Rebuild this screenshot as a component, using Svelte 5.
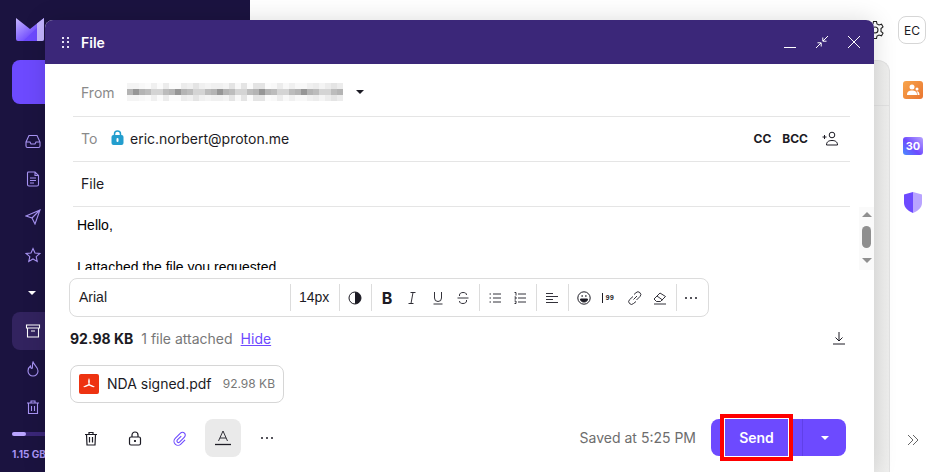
<script>
	// pixelated stand-in for the blurred sender address: three rows of 6px cells
	const light = ["#f4f4f4", "#ececec", "#f8f8f8", "#e4e4e4", "#f0f0f0", "#fbfbfb"];
	const mid = ["#a8a8a8", "#c2c2c2", "#969696", "#b4b4b4", "#d4d4d4", "#a0a0a0", "#bcbcbc"];
	const blur = [];
	for (let r = 0; r < 3; r++) {
		for (let i = 0; i < 36; i++) {
			const n = i * 5 + ((i * i) % 7) + r * 3;
			blur.push(r === 1 ? mid[n % mid.length] : light[n % light.length]);
		}
	}

	const nav = ["inbox", "draft", "sent", "star"];
	const nav2 = ["fire", "trash"];
</script>

<div class="page">
	<aside class="sidebar">
		<div class="logo">
			<svg width="28" height="23" viewBox="0 0 28 23">
				<defs>
					<linearGradient id="logo-left" x1="0" y1="0" x2="1" y2="1">
						<stop offset="0" stop-color="#c8b8ff" />
						<stop offset="0.6" stop-color="#7a58ff" />
					</linearGradient>
				</defs>
				<path d="M0 0 L14 11 L28 0 V21 a2 2 0 0 1 -2 2 H2 a2 2 0 0 1 -2 -2 Z" fill="url(#logo-left)" />
				<path d="M7 23 L21 10 V23 Z" fill="#6d4aff" />
				<path d="M21 5.500 L28 0 V21 a2 2 0 0 1 -2 2 H21 Z" fill="#c4b5ff" />
			</svg>
		</div>
		<div class="new-btn"></div>
		<nav class="nav">
			{#each nav as item}
				<span class="nav-item">
					<svg width="16" height="16" viewBox="0 0 16 16" fill="none" stroke="#a995f5" stroke-width="1.1">
						{#if item === "inbox"}
							<path d="M1 9 L4 2.500 H12 L15 9 V13 a1.500 1.500 0 0 1 -1.500 1.500 H2.500 A1.500 1.500 0 0 1 1 13 Z M1 9 H5 L6 11 H10 L11 9 H15" />
						{:else if item === "draft"}
							<path d="M3 1 H10 L13.500 4.500 V13.500 a1.500 1.500 0 0 1 -1.500 1.500 H4 a1.500 1.500 0 0 1 -1.500 -1.500 V2 Z M10 1 V4.500 H13.500 M5 7 H11 M5 9.500 H11 M5 12 H9" />
						{:else if item === "sent"}
							<path d="M1 7 L15 1 L10 15 L7 9 Z M7 9 L15 1" />
						{:else}
							<path d="M8 1.500 L10 6 L14.800 6.500 L11.200 9.700 L12.200 14.500 L8 12 L3.800 14.500 L4.800 9.700 L1.200 6.500 L6 6 Z" />
						{/if}
					</svg>
				</span>
			{/each}
			<span class="nav-item caret"><i class="tri"></i></span>
			<span class="nav-item active">
				<svg width="16" height="16" viewBox="0 0 16 16" fill="none" stroke="#fff" stroke-width="1.1">
					<path d="M1.500 2 H14.500 V5 H1.500 Z M2.500 5 V14 H13.500 V5 M6 8 H10" />
				</svg>
			</span>
			{#each nav2 as item}
				<span class="nav-item">
					<svg width="16" height="16" viewBox="0 0 16 16" fill="none" stroke="#a995f5" stroke-width="1.1">
						{#if item === "fire"}
							<path d="M8 1 C9 4 13 6 13 10 A5 5 0 0 1 3 10 C3 8 4 6 5.500 5 C5.500 6.500 6 7.500 7 7.500 C8 6 7 3 8 1 Z" />
						{:else}
							<path d="M2 4 H14 M6 4 V2 H10 V4 M3.500 4 V14.500 H12.500 V4 M6.500 7 V12 M9.500 7 V12" />
						{/if}
					</svg>
				</span>
			{/each}
		</nav>
		<div class="storage">
			<div class="bar"><div class="fill"></div></div>
			<span class="gb">1.15 GB</span>
		</div>
	</aside>

	<main class="main">
		<header class="topbar">
			<svg class="gear" width="20" height="20" viewBox="0 0 20 20" fill="none" stroke="#222" stroke-width="1.100">
				<circle cx="10" cy="10" r="3" />
				<path d="M8.500 1.500 H11.500 L12 4 L14 5 L16.500 4.200 L18 6.800 L16 8.500 V11.500 L18 13.200 L16.500 15.800 L14 15 L12 16 L11.500 18.500 H8.500 L8 16 L6 15 L3.500 15.800 L2 13.200 L4 11.500 V8.500 L2 6.800 L3.500 4.200 L6 5 L8 4 Z" />
			</svg>
			<span class="avatar">EC</span>
		</header>
		<div class="content">
			<div class="card">
				<div class="card-line"></div>
			</div>
			<div class="rail">
				<div class="apps">
					<span class="app orange">
						<svg width="14" height="12" viewBox="0 0 14 12" fill="#fff">
							<circle cx="6" cy="3" r="2.500" />
							<path d="M1 11 C1 7.500 3 6.500 6 6.500 C9 6.500 11 7.500 11 11 Z" />
							<circle cx="11" cy="5" r="1.500" />
							<path d="M11.500 11 C11.800 9.500 11.500 8 10.500 7.200 C12.500 7 13.500 8.500 13.500 11 Z" />
						</svg>
					</span>
					<span class="app cal">30</span>
					<svg class="shield" width="20" height="21" viewBox="0 0 20 21">
						<path d="M10 0 L19 2.500 V11 C19 16 14 19.500 10 21 Z" fill="#b9a4ff" />
						<path d="M10 0 L1 2.500 V11 C1 16 6 19.500 10 21 Z" fill="#6d4aff" />
					</svg>
				</div>
				<svg class="expand" width="12" height="12" viewBox="0 0 12 12" fill="none" stroke="#666" stroke-width="1">
					<path d="M1 1 L6 6 L1 11 M6 1 L11 6 L6 11" />
				</svg>
			</div>
		</div>
	</main>

	<section class="composer">
		<div class="title">
			<span class="grip">
				{#each Array(6) as _}<i></i>{/each}
			</span>
			<span class="title-text">File</span>
			<div class="win-btns">
				<svg width="14" height="14" viewBox="0 0 14 14" stroke="#fff" stroke-width="1"><path d="M1 12.500 H13" /></svg>
				<svg width="14" height="14" viewBox="0 0 14 14" stroke="#fff" stroke-width="1" fill="none"><path d="M1 13 L6 8 M2.500 7.800 H6.200 V11.500 M13 1 L8 6 M7.800 2.500 V6.200 H11.500" /></svg>
				<svg width="14" height="14" viewBox="0 0 14 14" stroke="#fff" stroke-width="1"><path d="M1 1 L13 13 M13 1 L1 13" /></svg>
			</div>
		</div>

		<div class="fields">
			<div class="row from">
				<span class="label">From</span>
				<span class="blur">
					{#each blur as c}<i style="background:{c}"></i>{/each}
				</span>
				<i class="tri dark"></i>
			</div>
			<div class="row to">
				<span class="label">To</span>
				<svg class="lock" width="13" height="15" viewBox="0 0 13 15">
					<path d="M3.500 6 V4 a3 3 0 0 1 6 0 V6" fill="none" stroke="#239ece" stroke-width="1.500" />
					<rect x="0.500" y="5" width="12" height="10" rx="2" fill="#239ece" />
					<rect x="5.500" y="8" width="2" height="4" rx="1" fill="#fff" />
				</svg>
				<span class="addr">eric.norbert@proton.me</span>
				<span class="cc">CC</span>
				<span class="cc bcc">BCC</span>
				<svg class="add-user" width="16" height="15" viewBox="0 0 16 15" fill="none" stroke="#1c1b24" stroke-width="1">
					<circle cx="10" cy="4" r="2.800" />
					<path d="M4.500 14 C4.500 10.500 7 9.500 10 9.500 C13 9.500 15.500 10.500 15.500 14 Z M0.500 6 H4.500 M2.500 4 V8" />
				</svg>
			</div>
			<div class="row subject">File</div>
		</div>

		<div class="body">
			<div class="mail">
				<p>Hello,</p>
				<p>I attached the file you requested.</p>
			</div>
			<div class="scroll">
				<i class="up"></i>
				<i class="thumb"></i>
				<i class="down"></i>
			</div>
		</div>

		<div class="toolbar">
			<span class="font">Arial</span>
			<span class="size">14px</span>
			<span class="group">
				<svg width="14" height="14" viewBox="0 0 14 14"><circle cx="7" cy="7" r="6" fill="none" stroke="#1c1b24" /><path d="M7 1 A6 6 0 0 1 7 13 Z" fill="#1c1b24" /></svg>
			</span>
			<span class="group">
				<b class="fmt bold">B</b>
				<svg width="14" height="14" viewBox="0 0 14 14" fill="none" stroke="#1c1b24" stroke-width="0.900"><path d="M5.500 1.500 H10.500 M3.500 12.500 H8.500 M8 1.500 L6 12.500" /></svg>
				<svg width="14" height="14" viewBox="0 0 14 14" fill="none" stroke="#1c1b24" stroke-width="0.900"><path d="M3.500 1 V7 a3.500 3.500 0 0 0 7 0 V1 M2.500 13 H11.500" /></svg>
				<svg width="14" height="14" viewBox="0 0 14 14" fill="none" stroke="#1c1b24" stroke-width="0.900"><path d="M1.500 7 H12.500 M10.500 4 C10.500 2 9 1.500 7 1.500 C5 1.500 3.500 2.500 3.500 4 V5 M3.500 10 C3.500 12 5 12.500 7 12.500 C9 12.500 10.500 11.500 10.500 10 V9" /></svg>
			</span>
			<span class="group">
				<svg width="14" height="14" viewBox="0 0 14 14" fill="none" stroke="#1c1b24" stroke-width="0.900"><path d="M5 3 H13 M5 7 H13 M5 11 H13 M1.500 3 H3 M1.500 7 H3 M1.500 11 H3" /></svg>
				<svg width="14" height="14" viewBox="0 0 14 14" fill="none" stroke="#1c1b24" stroke-width="0.900"><path d="M5 3 H13 M5 7 H13 M5 11 H13 M1.500 1.500 H3 V4.500 M1.500 6 H3 V8 H1.500 M1.500 10 H3 V12.500 H1.500" /></svg>
			</span>
			<span class="group">
				<svg width="14" height="14" viewBox="0 0 14 14" fill="none" stroke="#1c1b24" stroke-width="0.900"><path d="M1 2.500 H8 M1 5.500 H13 M1 8.500 H8 M1 11.500 H13" /></svg>
			</span>
			<span class="group">
				<svg width="14" height="14" viewBox="0 0 14 14" fill="none" stroke="#1c1b24" stroke-width="1"><circle cx="7" cy="7" r="6.200" /><path d="M3.500 8 H10.500 C10.500 10 9 11 7 11 C5 11 3.500 10 3.500 8 Z" fill="#1c1b24" /><path d="M4.500 5 H5.800 M8.200 5 H9.500" stroke-width="1.500" /></svg>
				<span class="quote"><i></i>99</span>
				<svg width="14" height="14" viewBox="0 0 14 14" fill="none" stroke="#1c1b24" stroke-width="0.900"><path d="M5.500 8.500 L9 5 M6 3.500 L8 1.700 a2.500 2.500 0 0 1 4 3.800 L8.500 9 M8 10.500 L5.500 12.500 a2.500 2.500 0 0 1 -4 -3.800 L5 5.500" /></svg>
				<svg width="14" height="14" viewBox="0 0 14 14" fill="none" stroke="#1c1b24" stroke-width="0.900"><path d="M1 8 L7 2 L12.500 5.500 L7.500 10.500 H3.500 Z M4 5 L9.500 9 M1 13 H13" /></svg>
			</span>
			<span class="group last">
				<span class="dots"><i></i><i></i><i></i></span>
			</span>
		</div>

		<div class="attach-info">
			<b>92.98 KB</b>
			<span class="muted">1 file attached</span>
			<span class="hide">Hide</span>
			<svg class="download" width="14" height="14" viewBox="0 0 14 14" fill="none" stroke="#1c1b24" stroke-width="1"><path d="M7 1 V10 M3.500 6.500 L7 10 L10.500 6.500 M1 13 H13" /></svg>
		</div>

		<div class="chip">
			<span class="pdf">
				<svg width="14" height="14" viewBox="0 0 14 14" fill="#fff">
					<path d="M7 1 C8 3 8 5 7.500 7 C9 8 11 8.500 13 10 C11 10.500 8.500 9.500 7 8.500 C5.500 9.500 3 10.500 1 10 C3 8.500 5 8 6.500 7 C6 5 6 3 7 1 Z" />
				</svg>
			</span>
			<span class="fname">NDA signed.pdf</span>
			<span class="fsize">92.98 KB</span>
		</div>

		<div class="footer">
			<div class="tools">
				<span class="tool">
					<svg width="14" height="15" viewBox="0 0 14 15" fill="none" stroke="#1c1b24" stroke-width="1.200"><path d="M1 3.500 H13 M5 3.500 V1.500 H9 V3.500 M2.500 3.500 L3 14 H11 L11.500 3.500 M5.500 6 V11.500 M8.500 6 V11.500" /></svg>
				</span>
				<span class="tool">
					<svg width="14" height="15" viewBox="0 0 14 15" fill="none" stroke="#1c1b24" stroke-width="1.200"><rect x="1.500" y="6" width="11" height="8" rx="1.500" /><path d="M4 6 V4 a3 3 0 0 1 6 0 V6" /><path d="M7 9 V11" stroke-width="1.800" /></svg>
				</span>
				<span class="tool">
					<svg width="17" height="17" viewBox="0 0 17 17" fill="none" stroke="#6d4aff" stroke-width="1.100"><path transform="rotate(45 8.500 8.500)" d="M8 5.500 V11 a1.500 1.500 0 0 0 3 0 V4 a2.800 2.800 0 0 0 -5.600 0 V11.500 a4 4 0 0 0 8 0 V5.500" /></svg>
				</span>
				<span class="tool on">
					<svg width="16" height="16" viewBox="0 0 16 16" fill="none" stroke="#1c1b24" stroke-width="0.900"><path d="M3.500 11 L8 1 L12.500 11 M5 8 H11" /><path d="M0 14.500 H16" stroke-width="1.300" /></svg>
				</span>
				<span class="tool"><span class="dots"><i></i><i></i><i></i></span></span>
			</div>
			<span class="saved">Saved at 5:25 PM</span>
			<div class="send">
				<span class="send-main">Send</span>
				<span class="send-more"><i class="tri white"></i></span>
				<span class="mark"></span>
			</div>
		</div>
	</section>
</div>

<style>
	:global(body) {
		margin: 0;
		font-family: Inter, "Noto Sans", sans-serif;
	}

	.page {
		position: relative;
		display: flex;
		width: 936px;
		height: 472px;
		overflow: hidden;
		background: #fff;
	}

	i {
		display: block;
	}

	.sidebar {
		display: flex;
		flex-direction: column;
		width: 250px;
		flex: none;
		box-sizing: border-box;
		padding: 18px 0 0 12px;
		background: #1b1340;
	}

	.logo {
		height: 23px;
		margin-left: 4px;
	}

	.new-btn {
		width: 100px;
		height: 44px;
		margin-top: 19px;
		border-radius: 8px;
		background: #6d4aff;
	}

	.nav {
		display: flex;
		flex-direction: column;
		width: 100px;
		margin-top: 18px;
	}

	.nav-item {
		display: flex;
		align-items: center;
		height: 38px;
		padding-left: 13px;
	}

	.active {
		width: 100px;
		box-sizing: border-box;
		border-radius: 8px;
		background: #32235f;
	}

	.tri {
		width: 0;
		height: 0;
		border-left: 4px solid transparent;
		border-right: 4px solid transparent;
		border-top: 4px solid #fff;
	}

	.caret .tri {
		margin-left: 3px;
	}

	.tri.dark {
		border-top-color: #1c1b24;
		margin-left: 13px;
	}

	.storage {
		margin-top: 6px;
	}

	.bar {
		width: 100px;
		height: 4px;
		border-radius: 2px;
		background: #3b2779;
	}

	.fill {
		width: 14px;
		height: 4px;
		border-radius: 2px;
		background: #b9a4ff;
	}

	.gb {
		display: block;
		margin-top: 12px;
		font-size: 10px;
		font-weight: 700;
		color: #a995f5;
	}

	.main {
		display: flex;
		flex-direction: column;
		flex: 1;
		min-width: 0;
	}

	.topbar {
		display: flex;
		justify-content: flex-end;
		align-items: center;
		gap: 13px;
		height: 60px;
		flex: none;
		box-sizing: border-box;
		padding: 0 10px 0 0;
	}

	.avatar {
		display: flex;
		align-items: center;
		justify-content: center;
		width: 26px;
		height: 26px;
		border: 1px solid #d6d6d6;
		border-radius: 8px;
		font-size: 12px;
		color: #1c1b24;
	}

	.content {
		display: flex;
		flex: 1;
		min-height: 0;
	}

	.card {
		flex: 1;
		border: 1px solid #e2e2e2;
		border-bottom: none;
		border-radius: 12px 12px 0 0;
		background: linear-gradient(90deg, #fff 0, #e9e9e8 96%, #efefee 100%);
	}

	.card-line {
		margin-top: 44px;
		border-top: 1px solid #e2e2e2;
	}

	.rail {
		display: flex;
		flex-direction: column;
		align-items: center;
		width: 46px;
		flex: none;
		padding-top: 21px;
		box-sizing: border-box;
	}

	.apps {
		display: flex;
		flex-direction: column;
		align-items: center;
		gap: 37.500px;
		height: 353px;
	}

	.app {
		display: flex;
		align-items: center;
		justify-content: center;
		width: 20px;
		height: 18px;
		flex: none;
		border-radius: 3px;
	}

	.orange {
		background: linear-gradient(135deg, #f8a54b, #e97530);
	}

	.cal {
		font-size: 11px;
		font-weight: 700;
		color: #fff;
		background: linear-gradient(45deg, #4a8dff 0, #6d4aff 45%, #b9a4ff 100%);
	}

	.shield {
		flex: none;
	}

	.composer {
		position: absolute;
		left: 45px;
		top: 20px;
		display: flex;
		flex-direction: column;
		width: 829px;
		height: 452px;
		border-radius: 8px 8px 0 0;
		background: #fff;
		box-shadow: 0 0 24px rgba(0, 0, 0, 0.14);
	}

	.title {
		display: flex;
		align-items: center;
		height: 44px;
		flex: none;
		box-sizing: border-box;
		padding: 0 13px 0 17px;
		border-radius: 8px 8px 0 0;
		background: #3b2779;
		color: #fff;
	}

	.grip {
		display: grid;
		grid-template-columns: 2px 2px;
		gap: 2.500px 3px;
		margin-right: 12px;
	}

	.grip i {
		width: 2px;
		height: 2px;
		background: #e6e1f7;
	}

	.title-text {
		font-size: 14px;
		font-weight: 600;
	}

	.win-btns {
		display: flex;
		gap: 18px;
		margin-left: auto;
	}

	.fields {
		margin: 0 24px 0 28px;
		flex: none;
	}

	.row {
		display: flex;
		align-items: center;
		box-sizing: border-box;
		height: 45px;
		padding: 0 0 2px 8px;
		border-bottom: 1px solid #e5e5e5;
		font-size: 14px;
		color: #1c1b24;
	}

	.from {
		height: 53px;
		padding-top: 6px;
	}

	.label {
		width: 46px;
		color: #8a8a8a;
	}

	.to .label {
		width: 30px;
	}

	.blur {
		display: flex;
		flex-wrap: wrap;
		width: 216px;
		height: 18px;
	}

	.blur i {
		width: 6px;
		height: 6px;
	}

	.lock {
		margin-right: 6px;
		margin-bottom: 2px;
	}

	.addr {
		margin-right: auto;
	}

	.cc {
		font-size: 12px;
		font-weight: 700;
		margin-right: 11px;
	}

	.bcc {
		margin-right: 14px;
	}

	.add-user {
		margin-right: 12px;
	}

	.body {
		display: flex;
		height: 63px;
		flex: none;
		margin: 0 0 0 27px;
		overflow: hidden;
		justify-content: space-between;
	}

	.mail {
		padding: 8px 0 0 5px;
		font-family: "Liberation Sans", Arial, sans-serif;
		font-size: 14px;
		line-height: 21px;
		color: #000;
	}

	.mail p {
		margin: 0 0 21px;
	}

	.scroll {
		display: flex;
		flex-direction: column;
		align-items: center;
		justify-content: space-between;
		width: 15px;
		height: 63px;
		padding: 5px 0 7px;
		box-sizing: border-box;
		background: #fafafa;
	}

	.scroll .thumb {
		width: 9px;
		height: 22px;
		margin-top: -2px;
		border-radius: 5px;
		background: #8f8f8f;
	}

	.scroll .up,
	.scroll .down {
		width: 0;
		height: 0;
		border-left: 5px solid transparent;
		border-right: 5px solid transparent;
	}

	.scroll .up {
		border-bottom: 5px solid #8f8f8f;
	}

	.scroll .down {
		border-top: 5px solid #8f8f8f;
	}

	.toolbar {
		display: flex;
		align-items: center;
		box-sizing: border-box;
		width: 640px;
		height: 39px;
		flex: none;
		margin: 8px 0 0 24px;
		border: 1px solid #dcdcdc;
		border-radius: 8px;
		font-size: 14px;
		color: #1c1b24;
	}

	.font {
		width: 220px;
		box-sizing: border-box;
		padding: 0 0 2px 9px;
		font-family: "Liberation Sans", Arial, sans-serif;
		font-size: 14px;
	}

	.size,
	.group {
		display: flex;
		align-items: center;
		height: 27px;
		border-left: 1px solid #dcdcdc;
	}

	.size {
		width: 49px;
		box-sizing: border-box;
		padding: 0 0 2px 8px;
		font-family: "Liberation Sans", Arial, sans-serif;
		font-size: 14px;
	}

	.group {
		gap: 11.300px;
		padding: 0 9px 0 8px;
	}

	.fmt.bold {
		width: 14px;
		text-align: center;
		font-size: 16px;
		font-weight: 700;
		line-height: 14px;
	}

	.quote {
		display: flex;
		align-items: center;
		width: 14px;
		font-family: "Liberation Mono", monospace;
		font-size: 7px;
		font-weight: 700;
	}

	.quote i {
		width: 1px;
		height: 10px;
		margin-right: 2px;
		background: #1c1b24;
	}

	.dots {
		display: flex;
		gap: 3px;
	}

	.dots i {
		width: 2px;
		height: 2px;
		border-radius: 50%;
		background: #1c1b24;
	}

	.attach-info {
		display: flex;
		align-items: center;
		gap: 8px;
		height: 20px;
		flex: none;
		margin: 11px 28px 0 25px;
		font-size: 14px;
		color: #1c1b24;
	}

	.attach-info b {
		font-weight: 700;
	}

	.muted {
		color: #777;
	}

	.hide {
		color: #6d4aff;
		text-decoration: underline;
	}

	.download {
		margin-left: auto;
	}

	.chip {
		display: flex;
		align-items: center;
		box-sizing: border-box;
		width: 214px;
		height: 38px;
		flex: none;
		margin: 17px 0 0 25px;
		padding: 0 8px;
		border: 1px solid #d6d6d6;
		border-radius: 8px;
	}

	.pdf {
		display: flex;
		align-items: center;
		justify-content: center;
		width: 20px;
		height: 20px;
		border-radius: 2px;
		background: #ee3311;
	}

	.fname {
		margin: 0 0 2px 8px;
		font-size: 14px;
		color: #1c1b24;
	}

	.fsize {
		margin: 0 0 2px auto;
		font-size: 12px;
		color: #777;
	}

	.footer {
		display: flex;
		align-items: center;
		height: 38px;
		flex: none;
		margin: 16px 28px 0 28px;
	}

	.tools {
		display: flex;
		gap: 8px;
		margin-right: auto;
	}

	.tool {
		display: flex;
		align-items: center;
		justify-content: center;
		width: 36px;
		height: 38px;
		border-radius: 8px;
	}

	.tool.on {
		background: #eaeaea;
	}

	.saved {
		margin: 0 15px 2px 0;
		font-size: 14px;
		color: #6d6d6d;
	}

	.send {
		position: relative;
		display: flex;
		height: 37px;
		margin-bottom: 1px;
		border-radius: 8px;
		background: #6d4aff;
		color: #fff;
	}

	.send-main {
		display: flex;
		align-items: center;
		justify-content: center;
		width: 91px;
		font-size: 14px;
		font-weight: 600;
	}

	.send-more {
		display: flex;
		align-items: center;
		justify-content: center;
		width: 43px;
		border-left: 1px solid #6040e8;
	}

	.mark {
		position: absolute;
		left: 9px;
		top: -5px;
		box-sizing: border-box;
		width: 73px;
		height: 47px;
		border: 4px solid #f00;
		outline: 1px solid #fff;
		outline-offset: -5px;
	}
</style>
